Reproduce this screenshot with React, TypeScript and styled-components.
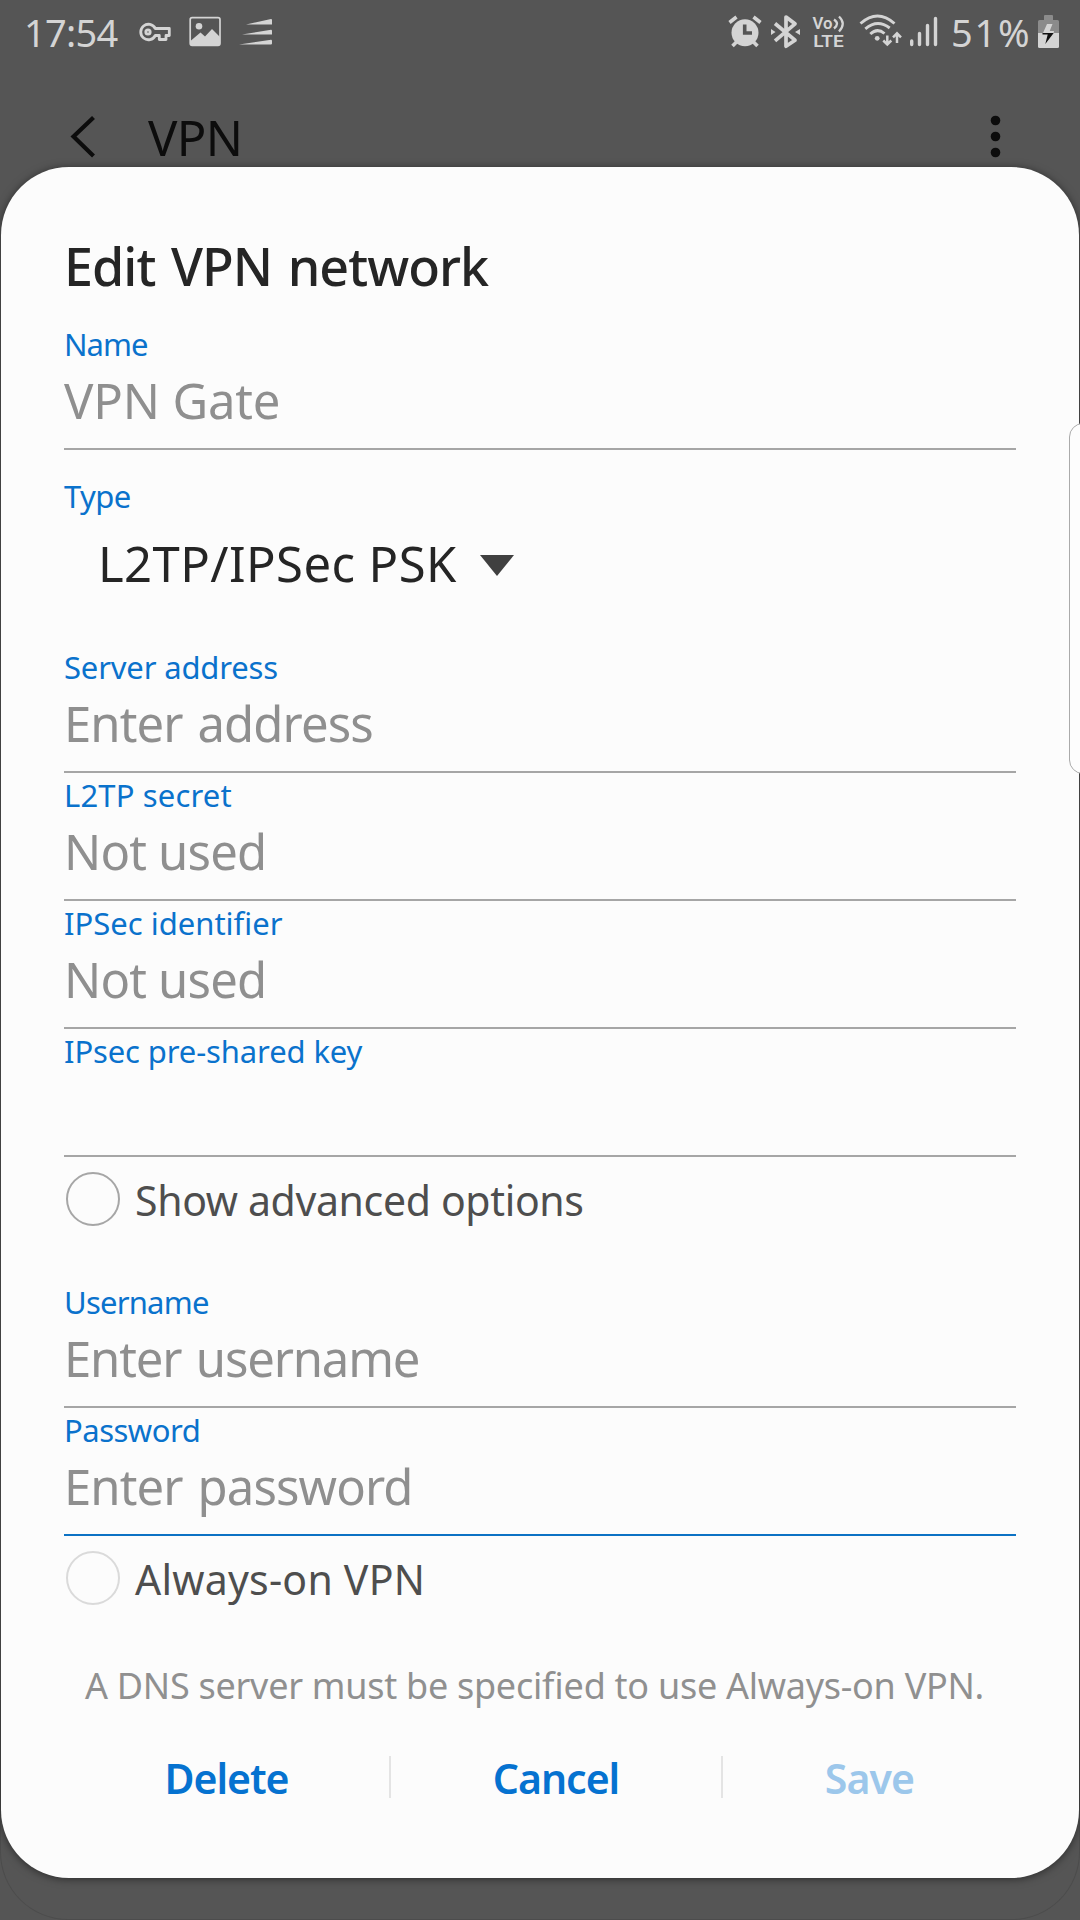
import React from "react";
import styled, { createGlobalStyle } from "styled-components";

const Global = createGlobalStyle`
  * { box-sizing: border-box; }
  html, body { margin: 0; background: #555; }
  body { font-family: "Noto Sans", "Open Sans", sans-serif; }
`;

const Screen = styled.div`
  position: relative;
  width: 1080px;
  height: 1920px;
  overflow: hidden;
  background: #555;
  display: flex;
  flex-direction: column;
`;

const PageOutline = styled.div`
  position: absolute;
  left: 0;
  right: 0;
  top: 1700px;
  bottom: 0;
  border: 1px solid #4c4c4c;
  border-top: 0;
  border-radius: 0 0 68px 68px;
`;

const StatusBar = styled.header`
  height: 68px;
  padding: 0 19px 0 24px;
  display: flex;
  justify-content: space-between;
  color: #d4d4d4;
`;

const StatusGroup = styled.div`
  display: flex;
  align-items: flex-start;
`;

const Svg = styled.svg<{ $gap: number }>`
  display: block;
  height: 68px;
  flex: none;
  margin-left: ${(p) => p.$gap}px;
`;

const T = styled.span<{ $ls?: number; $ws?: number }>`
  display: inline-block;
  white-space: nowrap;
  letter-spacing: ${(p) => p.$ls ?? 0}px;
  word-spacing: ${(p) => p.$ws ?? 0}px;
`;

const Ligature = styled.span`
  letter-spacing: 0;
`;

const StatusText = styled(T)<{ $w: number; $gap?: number }>`
  width: ${(p) => p.$w}px;
  margin-left: ${(p) => p.$gap ?? 0}px;
  font-size: 38px;
  line-height: 65px;
`;

const Toolbar = styled.div`
  height: 99px;
  display: flex;
  align-items: flex-start;
  padding: 44px 76px 0 70px;
  color: #0c0c0c;
`;

const ToolbarTitle = styled(T)`
  font-size: 49px;
  line-height: 51px;
  margin-left: 50px;
  flex: 1;
`;

const Dialog = styled.main`
  position: relative;
  width: 1078px;
  height: 1711px;
  margin: 0 auto;
  padding: 0 63px;
  border-radius: 68px;
  background: #fcfcfc;
  box-shadow: 0 1px 8px rgba(0, 0, 0, 0.5);
  display: flex;
  flex-direction: column;
`;

const Title = styled.h1`
  margin: 0;
  height: 155px;
  padding-top: 64px;
  font-size: 52px;
  line-height: 70px;
  font-weight: 500;
  color: #252525;
`;

const FieldBox = styled.label<{ $focus?: boolean }>`
  flex: none;
  height: 128px;
  border-bottom: 2px solid ${(p) => (p.$focus ? "#0c72c4" : "#a6a6a6")};
  display: flex;
  flex-direction: column;
`;

const Label = styled(T)`
  padding-top: 1px;
  height: 43px;
  font-size: 31px;
  line-height: 42px;
  color: #0a72cc;
`;

const Value = styled(T)`
  font-size: 49px;
  line-height: 70px;
  color: #8f8f8f;
`;

const TypeBlock = styled.div`
  flex: none;
  height: 171px;
  margin-top: 24px;
  display: flex;
  flex-direction: column;
`;

const Select = styled.div`
  display: flex;
  align-items: center;
  padding: 11px 0 0 34px;
  height: 81px;
  font-size: 49px;
  line-height: 70px;
  color: #252525;
`;

const Caret = styled.svg`
  margin: 5px 0 0 23px;
`;

const CheckRow = styled.div<{ $h: number }>`
  flex: none;
  height: ${(p) => p.$h}px;
  padding: 15px 0 0 2px;
  display: flex;
`;

const Circle = styled.span<{ $faint?: boolean }>`
  width: 54px;
  height: 54px;
  margin-right: 15px;
  border: 2px solid ${(p) => (p.$faint ? "#dadada" : "#a6a6a6")};
  border-radius: 50%;
`;

const CheckText = styled(T)`
  font-size: 41px;
  line-height: 56px;
  color: #4e4e4e;
`;

const Hint = styled.p`
  margin: 0;
  height: 96px;
  padding: 1px 0 0 21px;
  font-size: 36px;
  line-height: 50px;
  color: #909090;
`;

const Actions = styled.div`
  display: flex;
  height: 42px;
`;

const Action = styled.button<{ $w: number; $off?: boolean }>`
  width: ${(p) => p.$w}px;
  height: 42px;
  padding: 0;
  border: 0;
  background: none;
  font: 600 41px/44px "Noto Sans", sans-serif;
  color: ${(p) => (p.$off ? "#9cc7eb" : "#0572d0")};
  & + & { border-left: 2px solid #e4e4e4; }
`;

const EdgeHandle = styled.div`
  position: absolute;
  left: 1069px;
  top: 423px;
  width: 30px;
  height: 351px;
  border: 1px solid #aaa;
  border-radius: 14px;
  background: #fdfdfd;
`;

const INK = "#d4d4d4";

interface FieldProps {
  label: string;
  value?: string;
  labelSpacing?: number;
  valueSpacing?: number;
  wordSpacing?: number;
  focus?: boolean;
}

function Field({ label, value, labelSpacing, valueSpacing, wordSpacing, focus }: FieldProps) {
  return (
    <FieldBox $focus={focus}>
      <Label $ls={labelSpacing}>{label}</Label>
      <Value $ls={valueSpacing} $ws={wordSpacing}>{value}</Value>
    </FieldBox>
  );
}

function KeyIcon() {
  return (
    <Svg $gap={18} width="34" viewBox="138 0 34 68" fill="none" stroke={INK} strokeWidth="2.8">
      <path d="M155.300 28.500A7.700 7.700 0 1 0 155.300 35.500H159.300V39.500H166V35.500H169.300V28.500Z" strokeLinejoin="round" />
      <circle cx="148" cy="32" r="2.200" />
    </Svg>
  );
}

function PictureIcon() {
  return (
    <Svg $gap={16} width="34" viewBox="188 0 34 68">
      <rect x="190.200" y="17.700" width="29.800" height="27.600" rx="2" fill="none" stroke={INK} strokeWidth="1.700" />
      <circle cx="199" cy="26.200" r="3.300" fill={INK} />
      <path d="M191 40.500L200.500 32.500L205 36.500L212 29L220 37V45H191Z" fill={INK} />
    </Svg>
  );
}

function WedgesIcon() {
  return (
    <Svg $gap={16} width="36" viewBox="238 0 36 68" fill={INK}>
      <path d="M246 24.500L271 19Q272 19 272 20V24.500ZM242 34.500L271 29.800Q272 29.800 272 31V34.500ZM239 44.500L271 39.800Q272 39.800 272 41V43.500Q272 44.500 271 44.500Z" />
    </Svg>
  );
}

function AlarmIcon() {
  return (
    <Svg $gap={0} width="36" viewBox="727 0 36 68">
      <circle cx="745" cy="32.700" r="13.500" fill={INK} />
      <path d="M729.500 22.500L736.500 17M760.500 22.500L753.500 17M732.500 46L737.500 41M757.500 46L752.500 41" stroke={INK} strokeWidth="3.600" />
      <path d="M744.700 24.500V33H752" fill="none" stroke="#555" strokeWidth="3.600" />
    </Svg>
  );
}

function BluetoothIcon() {
  return (
    <Svg $gap={7} width="32" viewBox="770 0 32 68">
      <path d="M775 23.500L795 40.200L786 46.200V17L795 23.800L775 40.800" fill="none" stroke={INK} strokeWidth="3.700" strokeLinejoin="round" />
      <path d="M771 29L775.500 32L771 35ZM800 29L795 32L800 35Z" fill={INK} />
    </Svg>
  );
}

const LteText = styled.text`
  font: 600 17px Roboto, "Liberation Sans", sans-serif;
  fill: ${INK};
`;

function VolteIcon() {
  return (
    <Svg $gap={8} width="36" viewBox="810 0 36 68">
      <LteText x="812.500" y="28.500" textLength="20" lengthAdjust="spacingAndGlyphs">Vo</LteText>
      <LteText x="813.200" y="47" textLength="30.500" lengthAdjust="spacingAndGlyphs">LTE</LteText>
      <path d="M834 19.500Q840 23.500 834 28.500M839 16.500Q846.500 23.500 839 31.500" fill="none" stroke={INK} strokeWidth="2.300" />
    </Svg>
  );
}

function WifiIcon() {
  return (
    <Svg $gap={12} width="46" viewBox="858 0 46 68" fill="none" stroke={INK}>
      <path d="M860.500 23.500Q877.500 8.500 894.500 23.500M865.300 28.800Q877.500 18.500 889.700 28M870.300 34Q877.300 27.500 884.500 33.500" strokeWidth="2.900" />
      <circle cx="877.200" cy="38.300" r="2.400" fill={INK} stroke="none" />
      <path d="M887.300 35.500V44M883.300 40.500L887.300 44.500L891.300 40.500M897 43V33.500M893 37.300L897 33.300L901 37.300" strokeWidth="2.500" />
    </Svg>
  );
}

function SignalIcon() {
  return (
    <Svg $gap={4} width="30" viewBox="908 0 30 68" stroke={INK} strokeWidth="3.400" strokeLinecap="round">
      <path d="M911.700 41V44.500M919.500 33.500V44.500M927.500 25.500V44.500M935.500 18.500V44.500" />
    </Svg>
  );
}

function BatteryIcon() {
  return (
    <Svg $gap={2} width="25" viewBox="1036 0 25 68">
      <path d="M1044 20V16Q1044 15 1045 15H1052Q1053 15 1053 16V20H1057.500Q1059 20 1059 21.500V33H1038V21.500Q1038 20 1039.500 20Z" fill="#8b8b8b" />
      <path d="M1038 33H1059V46.500Q1059 48 1057.500 48H1039.500Q1038 48 1038 46.500Z" fill={INK} />
      <path d="M1047 24H1052.500L1049.700 31H1054L1053.500 33H1043Z" fill={INK} />
      <path d="M1042.500 33H1053.700L1045.300 44L1047.700 34.500H1042.500Z" fill="#111" />
    </Svg>
  );
}

export default function App() {
  return (
    <>
      <Global />
      <Screen>
        <PageOutline />
        <StatusBar>
          <StatusGroup>
            <StatusText $w={96} $ls={-0.7}>17:54</StatusText>
            <KeyIcon />
            <PictureIcon />
            <WedgesIcon />
          </StatusGroup>
          <StatusGroup>
            <AlarmIcon />
            <BluetoothIcon />
            <VolteIcon />
            <WifiIcon />
            <SignalIcon />
            <StatusText $w={83} $gap={13} $ls={1.8}>51%</StatusText>
            <BatteryIcon />
          </StatusGroup>
        </StatusBar>
        <Toolbar>
          <svg width="28" height="50" viewBox="70 112 28 50" fill="none" stroke="#0c0c0c" strokeWidth="4.200">
            <path d="M93.500 117.500L73.500 136.500L93.500 156" />
          </svg>
          <ToolbarTitle $ls={-0.6}>VPN</ToolbarTitle>
          <svg width="16" height="50" viewBox="987 112 16 50" fill="#0c0c0c">
            <circle cx="994.500" cy="120.500" r="4.800" />
            <circle cx="994.500" cy="136.500" r="4.800" />
            <circle cx="994.500" cy="152.500" r="4.800" />
          </svg>
        </Toolbar>
        <Dialog>
          <Title><T $ls={-0.95} $ws={3}>Edit VPN network</T></Title>
          <Field label="Name" labelSpacing={-1} value="VPN Gate" valueSpacing={-0.15} />
          <TypeBlock>
            <Label $ls={-0.6}>Type</Label>
            <Select>
              <T $ls={0.43}>L2TP/IPSec PSK</T>
              <Caret width="34" height="22"><path d="M0 0H34L17 21Z" fill="#404040" /></Caret>
            </Select>
          </TypeBlock>
          <Field label="Server address" labelSpacing={-0.17} value="Enter address" valueSpacing={-0.89} wordSpacing={3} />
          <Field label="L2TP secret" labelSpacing={0.15} value="Not used" valueSpacing={-0.8} />
          <Field label="IPSec identifier" value="Not used" valueSpacing={-0.8} />
          <Field label="IPsec pre-shared key" labelSpacing={-0.12} />
          <CheckRow $h={123}><Circle /><CheckText $ls={-0.35}>Show advanced options</CheckText></CheckRow>
          <Field label="Username" labelSpacing={-0.77} value="Enter username" valueSpacing={-1.17} wordSpacing={3} />
          <Field focus label="Password" labelSpacing={-0.5} value="Enter password" valueSpacing={-0.88} wordSpacing={3} />
          <CheckRow $h={124}><Circle $faint /><CheckText $ls={0.23}>Always-on VPN</CheckText></CheckRow>
          <Hint><T $ls={-0.27}>A DNS server must be speci<Ligature>fi</Ligature>ed to use Always-on VPN.</T></Hint>
          <Actions>
            <Action $w={325}><T $ls={-1}>Delete</T></Action>
            <Action $w={332}><T $ls={-1}>Cancel</T></Action>
            <Action $w={295} $off><T $ls={-0.9}>Save</T></Action>
          </Actions>
        </Dialog>
        <EdgeHandle />
      </Screen>
    </>
  );
}
